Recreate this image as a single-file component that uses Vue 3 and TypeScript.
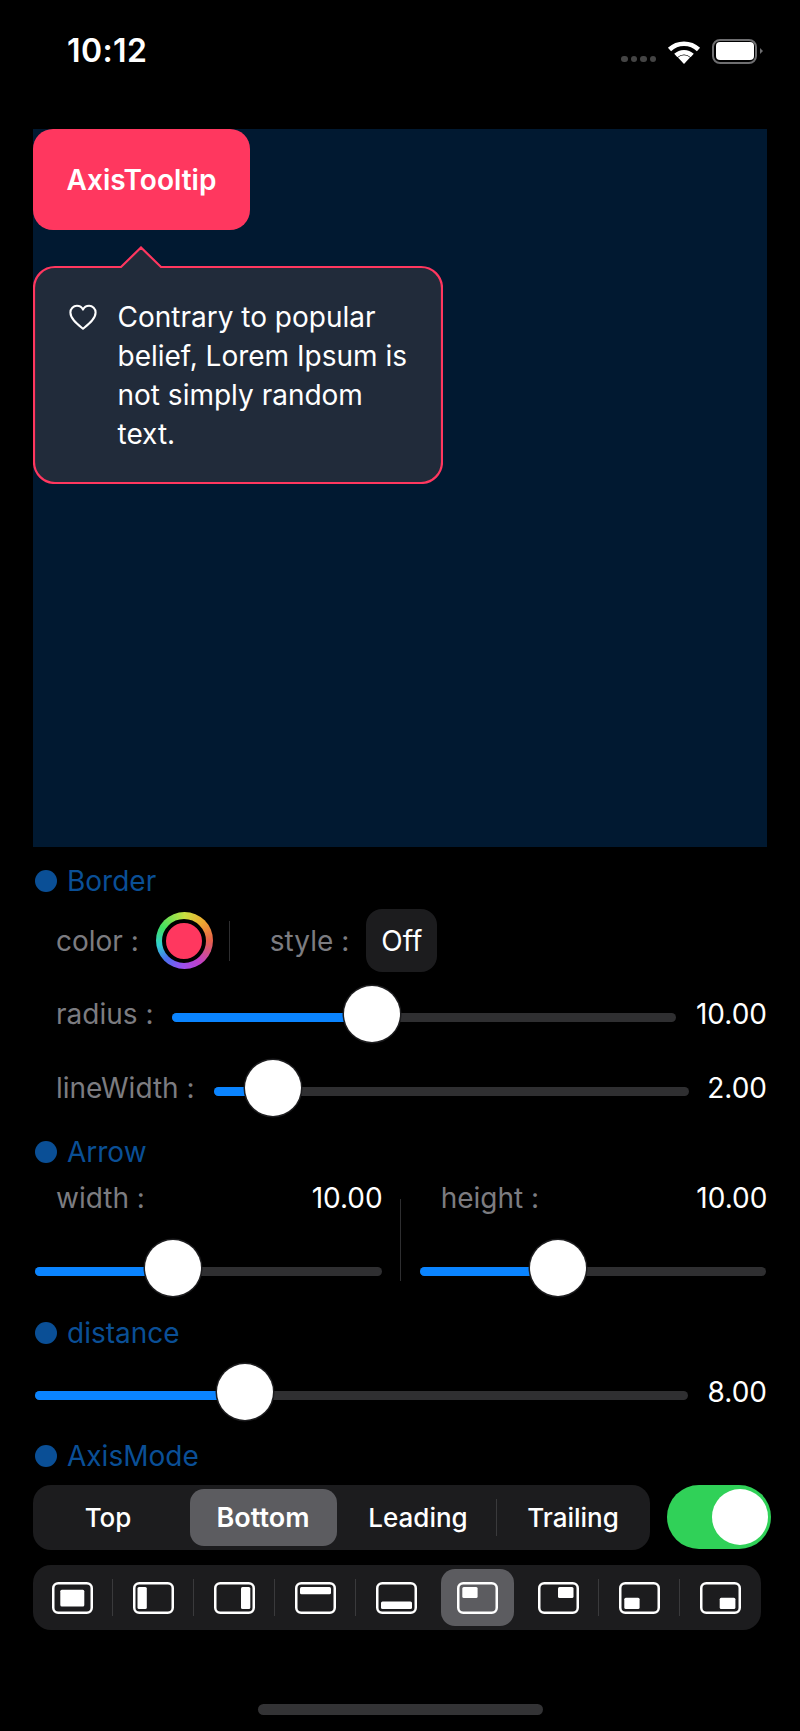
<script setup lang="ts">
interface SliderProps {
  percent: number
}

const positions = [
  { x: 8.3, y: 7.7, w: 24, h: 16.7, sel: false },
  { x: 4.5, y: 5, w: 9.3, h: 22, sel: false },
  { x: 27, y: 5, w: 9.3, h: 22, sel: false },
  { x: 5, y: 5, w: 31, h: 7.3, sel: false },
  { x: 5, y: 19.4, w: 31, h: 7.6, sel: false },
  { x: 5.3, y: 5, w: 15.3, h: 11, sel: true },
  { x: 20, y: 5, w: 15.5, h: 11, sel: false },
  { x: 5.3, y: 15.7, w: 15.3, h: 11.3, sel: false },
  { x: 19.7, y: 15.7, w: 15.7, h: 11.3, sel: false }
]

const segments = ['Top', 'Bottom', 'Leading', 'Trailing']

// thumb centre as a share of the track width
const thumbLeft = (props: SliderProps): string => `${props.percent}%`
</script>

<template>
  <div class="page">
    <div class="status-bar">
      <span class="time">10:12</span>
      <div class="status-icons">
        <div class="signal"><i></i><i></i><i></i><i></i></div>
        <svg class="wifi" viewBox="0 0 34 25" fill="none" stroke="#fff" stroke-width="4.6">
          <path d="M2.5 10.5 A21 21 0 0 1 31.5 10.5" />
          <path d="M8.8 16.5 A12 12 0 0 1 25.2 16.5" />
          <path d="M17 25 L11 18.5 A9 9 0 0 1 23 18.5 Z" fill="#fff" stroke="none" />
        </svg>
        <div class="battery"><div class="battery-fill"></div></div>
        <div class="battery-cap"></div>
      </div>
    </div>

    <div class="canvas">
      <button class="target">AxisTooltip</button>
      <div class="tooltip">
        <svg class="tip-shape" viewBox="0 0 410 238" fill="#212b3a" stroke="#ff375f" stroke-width="2.2">
          <path d="M22 21 H88 L108 1.5 L128 21 H388 A21 21 0 0 1 409 42 V216 A21 21 0 0 1 388 237 H22 A21 21 0 0 1 1 216 V42 A21 21 0 0 1 22 21 Z" />
        </svg>
        <div class="tip-body">
          <svg class="heart" viewBox="0 0 30 28" fill="none" stroke="#fff" stroke-width="2.2">
            <path d="M15 26 C9 21 1.5 15.5 1.5 8.7 C1.5 4.5 4.7 1.5 8.5 1.5 C11.2 1.5 13.7 3 15 5.6 C16.3 3 18.8 1.5 21.5 1.5 C25.3 1.5 28.5 4.5 28.5 8.7 C28.5 15.5 21 21 15 26 Z" stroke-linejoin="round" />
          </svg>
          <p class="tip-text">Contrary to popular belief, Lorem Ipsum is not simply random text.</p>
        </div>
      </div>
    </div>

    <section class="controls">
      <h4 class="heading border-heading"><span class="dot"></span>Border</h4>

      <div class="row color-row">
        <span class="label">color :</span>
        <div class="color-well"><div class="color-inner"></div></div>
        <span class="v-line"></span>
        <span class="label style-label">style :</span>
        <button class="off-btn">Off</button>
      </div>

      <div class="row slider-row radius-row">
        <span class="label">radius :</span>
        <div class="slider">
          <div class="track"><div class="fill" :style="{ width: thumbLeft({ percent: 39.7 }) }"></div></div>
          <div class="thumb" :style="{ left: thumbLeft({ percent: 39.7 }) }"></div>
        </div>
        <span class="value">10.00</span>
      </div>

      <div class="row slider-row linewidth-row">
        <span class="label">lineWidth :</span>
        <div class="slider">
          <div class="track"><div class="fill" :style="{ width: thumbLeft({ percent: 12.4 }) }"></div></div>
          <div class="thumb" :style="{ left: thumbLeft({ percent: 12.4 }) }"></div>
        </div>
        <span class="value">2.00</span>
      </div>

      <h4 class="heading arrow-heading"><span class="dot"></span>Arrow</h4>
      <div class="arrow-grid">
        <div class="arrow-col">
          <div class="arrow-top">
            <span class="label">width :</span>
            <span class="value">10.00</span>
          </div>
          <div class="slider">
            <div class="track"><div class="fill" :style="{ width: thumbLeft({ percent: 39.8 }) }"></div></div>
            <div class="thumb" :style="{ left: thumbLeft({ percent: 39.8 }) }"></div>
          </div>
        </div>
        <span class="v-line arrow-line"></span>
        <div class="arrow-col right-col">
          <div class="arrow-top">
            <span class="label">height :</span>
            <span class="value">10.00</span>
          </div>
          <div class="slider">
            <div class="track"><div class="fill" :style="{ width: thumbLeft({ percent: 39.8 }) }"></div></div>
            <div class="thumb" :style="{ left: thumbLeft({ percent: 39.8 }) }"></div>
          </div>
        </div>
      </div>

      <h4 class="heading distance-heading"><span class="dot"></span>distance</h4>
      <div class="row distance-row">
        <div class="slider">
          <div class="track"><div class="fill" :style="{ width: thumbLeft({ percent: 32.2 }) }"></div></div>
          <div class="thumb" :style="{ left: thumbLeft({ percent: 32.2 }) }"></div>
        </div>
        <span class="value">8.00</span>
      </div>

      <h4 class="heading axis-heading"><span class="dot"></span>AxisMode</h4>
      <div class="mode-row">
        <div class="segmented">
          <div v-for="(seg, i) in segments" :key="seg" class="segment" :class="{ active: i === 1, 'with-line': i === 3 }">
            {{ seg }}
          </div>
        </div>
        <div class="toggle"><div class="knob"></div></div>
      </div>

      <div class="pos-bar">
        <div v-for="(p, i) in positions" :key="i" class="pos-cell" :class="{ active: p.sel, 'with-line': i > 0 && i !== 5 && i !== 6 }">
          <svg class="pos-icon" viewBox="0 0 41 32">
            <rect x="1.25" y="1.25" width="38.5" height="29.5" rx="5" fill="none" stroke="#fff" stroke-width="2.5" />
            <rect :x="p.x" :y="p.y" :width="p.w" :height="p.h" rx="1.5" fill="#fff" />
          </svg>
        </div>
      </div>
    </section>

    <div class="home-bar"></div>
  </div>
</template>

<style>
html,
body {
  margin: 0;
  background: #000;
}
</style>

<style scoped>
.page {
  width: 800px;
  height: 1731px;
  position: relative;
  overflow: hidden;
  background: #000;
  color: #fff;
  font-family: Inter, "Liberation Sans", sans-serif;
}

.status-bar {
  height: 129px;
  box-sizing: border-box;
  padding: 32px 0 0 67px;
  display: flex;
  justify-content: space-between;
}

.time {
  font-size: 32px;
  line-height: 38px;
  font-weight: 600;
  letter-spacing: 0.4px;
}

.status-icons {
  display: flex;
  align-items: center;
  height: 38px;
  margin-right: 37px;
}

.signal {
  display: flex;
  gap: 3px;
  margin-right: 11px;
  margin-top: 16px;
}

.signal i {
  width: 6.5px;
  height: 6.5px;
  border-radius: 50%;
  background: #444;
}

.wifi {
  width: 34px;
  height: 25px;
  margin-right: 11px;
}

.battery {
  width: 45px;
  height: 25px;
  box-sizing: border-box;
  border: 2.5px solid #6e6e70;
  border-radius: 8px;
  padding: 1.5px;
}

.battery-fill {
  width: 100%;
  height: 100%;
  border-radius: 4px;
  background: #fff;
}

.battery-cap {
  width: 0;
  height: 0;
  margin-left: 3px;
  border-top: 3.5px solid transparent;
  border-bottom: 3.5px solid transparent;
  border-left: 3px solid #6e6e70;
}

.canvas {
  position: relative;
  margin-left: 33px;
  width: 734px;
  height: 718px;
  background: #011931;
}

.target {
  display: block;
  width: 217px;
  height: 101px;
  border: 0;
  padding: 0;
  border-radius: 20px;
  background: #ff375f;
  color: #fff;
  font-family: inherit;
  font-size: 28px;
  font-weight: 600;
}

.tooltip {
  position: absolute;
  left: 0;
  top: 117px;
  width: 410px;
  height: 238px;
}

.tip-shape {
  position: absolute;
  inset: 0;
  width: 100%;
  height: 100%;
}

.tip-body {
  position: relative;
  display: flex;
  padding: 52px 30px 0 36px;
}

.heart {
  flex: none;
  width: 28px;
  height: 27px;
  margin-top: 6px;
  margin-right: 20.5px;
}

.tip-text {
  margin: 0;
  font-size: 28px;
  line-height: 39px;
  color: #fff;
}

.controls {
  position: relative;
}

.heading {
  display: flex;
  align-items: center;
  margin: 0;
  height: 34px;
  padding-left: 35px;
  font-size: 28px;
  font-weight: 400;
  color: #0a4f96;
}

.dot {
  width: 22px;
  height: 22px;
  margin-right: 10px;
  border-radius: 50%;
  background: #0a4f96;
}

.border-heading {
  margin-top: 17px;
}

.row {
  display: flex;
  align-items: center;
}

.label {
  font-size: 28px;
  color: #7c7c80;
  white-space: nowrap;
}

.value {
  font-size: 28px;
  color: #fff;
  white-space: nowrap;
}

.color-row {
  height: 63px;
  margin-top: 11px;
  padding-left: 56px;
}

.color-well {
  width: 57px;
  height: 57px;
  margin-left: 17px;
  border-radius: 50%;
  background: conic-gradient(#c8e040, #f0a830 45deg, #e8604a 90deg, #c040c8 145deg, #9a50f0 185deg, #4a70f0 225deg, #30d0d0 260deg, #40e060 300deg, #c8e040);
  display: flex;
  align-items: center;
  justify-content: center;
}

.color-inner {
  width: 36px;
  height: 36px;
  border: 4px solid #000;
  border-radius: 50%;
  background: #ff375f;
}

.v-line {
  display: block;
  width: 1px;
  height: 40px;
  margin-left: 16px;
  background: #2e2e30;
}

.style-label {
  margin-left: 40px;
}

.off-btn {
  width: 71px;
  height: 63px;
  margin-left: 17px;
  padding: 0;
  border: 0;
  border-radius: 16px;
  background: #1c1c1e;
  color: #fff;
  font-family: inherit;
  font-size: 28px;
}

.slider {
  position: relative;
  flex: 1;
  height: 56px;
}

.track {
  position: absolute;
  left: 0;
  right: 0;
  top: 27px;
  height: 9px;
  border-radius: 5px;
  background: #2f2f31;
  overflow: hidden;
}

.fill {
  height: 100%;
  background: #0a84ff;
}

.thumb {
  position: absolute;
  top: 0;
  width: 56px;
  height: 56px;
  margin-left: -28px;
  border-radius: 50%;
  background: #fff;
  box-shadow: 0 0 0 1.5px #1d1d1f;
}

.slider-row {
  height: 56px;
  padding-left: 56px;
}

.slider-row .value,
.distance-row .value {
  text-align: right;
  margin-right: 33px;
}

.radius-row {
  margin-top: 14px;
}

.radius-row .label {
  width: 116px;
}

.radius-row .value {
  width: 91px;
}

.linewidth-row {
  margin-top: 18px;
}

.linewidth-row .label {
  width: 158px;
}

.linewidth-row .value {
  width: 78px;
}

.arrow-heading {
  margin-top: 19px;
}

.arrow-grid {
  display: flex;
  padding-left: 35px;
  height: 115px;
  margin-top: 12px;
}

.arrow-col {
  width: 346.7px;
  display: flex;
  flex-direction: column;
}

.arrow-top {
  display: flex;
  justify-content: space-between;
  padding-left: 21px;
  height: 34px;
  line-height: 34px;
}

.arrow-top .value {
  margin-right: -1px;
}

.arrow-col .slider {
  flex: none;
  margin-top: 25px;
}

.arrow-line {
  height: 82px;
  margin: 18px 0 0 18px;
}

.right-col {
  margin-left: 19px;
}

.distance-heading {
  margin-top: 20px;
}

.distance-row {
  height: 56px;
  margin-top: 14px;
  padding-left: 35px;
}

.distance-row .value {
  width: 79px;
}

.axis-heading {
  margin-top: 19px;
}

.mode-row {
  display: flex;
  margin-top: 12px;
  padding-left: 33px;
}

.segmented {
  flex: none;
  width: 617px;
  height: 65px;
  border-radius: 18px;
  background: #1c1c1e;
  display: flex;
}

.segment {
  position: relative;
  flex: none;
  width: 147px;
  margin: 4px;
  border-radius: 14px;
  display: flex;
  align-items: center;
  justify-content: center;
  font-size: 26px;
  font-weight: 500;
}

.segment:first-child {
  margin-left: 1.5px;
}

.segment.active {
  background: #5c5c60;
  font-size: 27px;
  font-weight: 600;
}

.segment.with-line::before {
  content: "";
  position: absolute;
  left: -4px;
  top: 10px;
  bottom: 10px;
  width: 1.5px;
  background: #3a3a3c;
}

.toggle {
  flex: none;
  width: 104px;
  height: 64px;
  margin-left: 17px;
  border-radius: 32px;
  background: #30d158;
  position: relative;
}

.knob {
  position: absolute;
  right: 3px;
  top: 4px;
  width: 56px;
  height: 56px;
  border-radius: 50%;
  background: #fff;
}

.pos-bar {
  width: 728px;
  height: 65px;
  margin: 15px 0 0 33px;
  border-radius: 18px;
  background: #1c1c1e;
  display: flex;
  box-sizing: border-box;
}

.pos-cell {
  position: relative;
  width: 81px;
  flex: none;
  display: flex;
  align-items: center;
  justify-content: center;
}

.pos-cell:first-child {
  margin-left: -1.5px;
}

.pos-cell.active::after {
  content: "";
  position: absolute;
  z-index: 0;
  left: 4px;
  right: 4px;
  top: 4px;
  bottom: 4px;
  border-radius: 14px;
  background: #5c5c60;
}

.pos-cell.with-line::before {
  content: "";
  position: absolute;
  left: -0.75px;
  top: 14px;
  height: 37px;
  width: 1.5px;
  background: #3a3a3c;
}

.pos-icon {
  position: relative;
  z-index: 1;
  width: 41px;
  height: 32px;
}

.home-bar {
  position: absolute;
  left: 258px;
  top: 1704px;
  width: 285px;
  height: 11px;
  border-radius: 6px;
  background: #333335;
}
</style>
